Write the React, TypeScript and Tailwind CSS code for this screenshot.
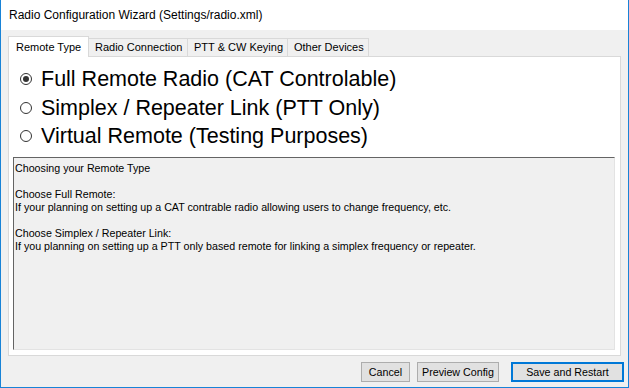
import React, { useState } from 'react';

const tabs = [
  { label: 'Remote Type', w: 'w-[81px]' },
  { label: 'Radio Connection', w: 'w-[99px]' },
  { label: 'PTT & CW Keying', w: 'w-[100px]' },
  { label: 'Other Devices', w: 'w-[81px]' },
];

const options = [
  'Full Remote Radio (CAT Controlable)',
  'Simplex / Repeater Link (PTT Only)',
  'Virtual Remote (Testing Purposes)',
];

function Radio({ checked }: { checked: boolean }) {
  return (
    <span className="w-[12px] h-[12px] rounded-full border border-[#333333] bg-white flex items-center justify-center shrink-0">
      {checked && <span className="w-[6px] h-[6px] rounded-full bg-[#333333]" />}
    </span>
  );
}

export default function App() {
  const [selected, setSelected] = useState(0);

  return (
    <div className="w-[629px] h-[388px] flex flex-col bg-[#f0f0f0] border-x border-b border-[#1883d7] font-['Liberation_Sans',sans-serif] text-black overflow-hidden">
      {/* Title bar */}
      <div className="h-[30px] bg-white flex items-center px-[8px] text-[12px] shrink-0">
        Radio Configuration Wizard (Settings/radio.xml)
      </div>

      {/* Body */}
      <div className="flex-1 flex flex-col pl-[7px] pr-[7px] pt-[6px]">
        {/* Tabs */}
        <div className="flex items-end h-[20px] text-[11px]">
          {tabs.map((t, i) =>
            i === 0 ? (
              <div
                key={t.label}
                className={`${t.w} h-[21px] pl-[7px] bg-white border border-b-0 border-[#d9d9d9] flex items-center relative top-[1px] z-10`}
              >
                {t.label}
              </div>
            ) : (
              <div
                key={t.label}
                className={`${t.w} h-[18px] pl-[6px] bg-[#f0f0f0] border border-l-0 border-b-0 border-[#d9d9d9] flex items-center`}
              >
                {t.label}
              </div>
            )
          )}
        </div>

        {/* Tab page */}
        <div className="h-[300px] bg-white border border-[#d9d9d9] flex flex-col px-[4px] pb-[5px]">
          <div className="flex flex-col pl-[7px] pt-[8px] pb-[6px]">
            {options.map((o, i) => (
              <label
                key={o}
                onClick={() => setSelected(i)}
                className="h-[28.5px] flex items-center gap-[9px] text-[21.5px] cursor-default"
              >
                <Radio checked={selected === i} />
                <span>{o}</span>
              </label>
            ))}
          </div>

          <div className="flex-1 mr-[1px] bg-[#f0f0f0] border border-t-[#646464] border-l-[#646464] border-r-[#e3e3e3] border-b-[#e3e3e3] px-[1px] pt-[4px] text-[10.7px] leading-[13px]">
            <p>Choosing your Remote Type</p>
            <p>&nbsp;</p>
            <p>Choose Full Remote:</p>
            <p>If your planning on setting up a CAT contrable radio allowing users to change frequency, etc.</p>
            <p>&nbsp;</p>
            <p>Choose Simplex / Repeater Link:</p>
            <p>If you planning on setting up a PTT only based remote for linking a simplex frequency or repeater.</p>
          </div>
        </div>

        {/* Buttons */}
        <div className="flex justify-end items-center gap-[7px] pt-[6px] pr-[-1px] text-[10.7px]">
          <button className="w-[49px] h-[20px] bg-[#e1e1e1] border border-[#adadad]">Cancel</button>
          <button className="w-[82px] h-[20px] bg-[#e1e1e1] border border-[#adadad] mr-[5px]">Preview Config</button>
          <button className="w-[113px] h-[20px] bg-[#e1e1e1] border-2 border-[#0078d7] -mr-[3px]">Save and Restart</button>
        </div>
      </div>
    </div>
  );
}
